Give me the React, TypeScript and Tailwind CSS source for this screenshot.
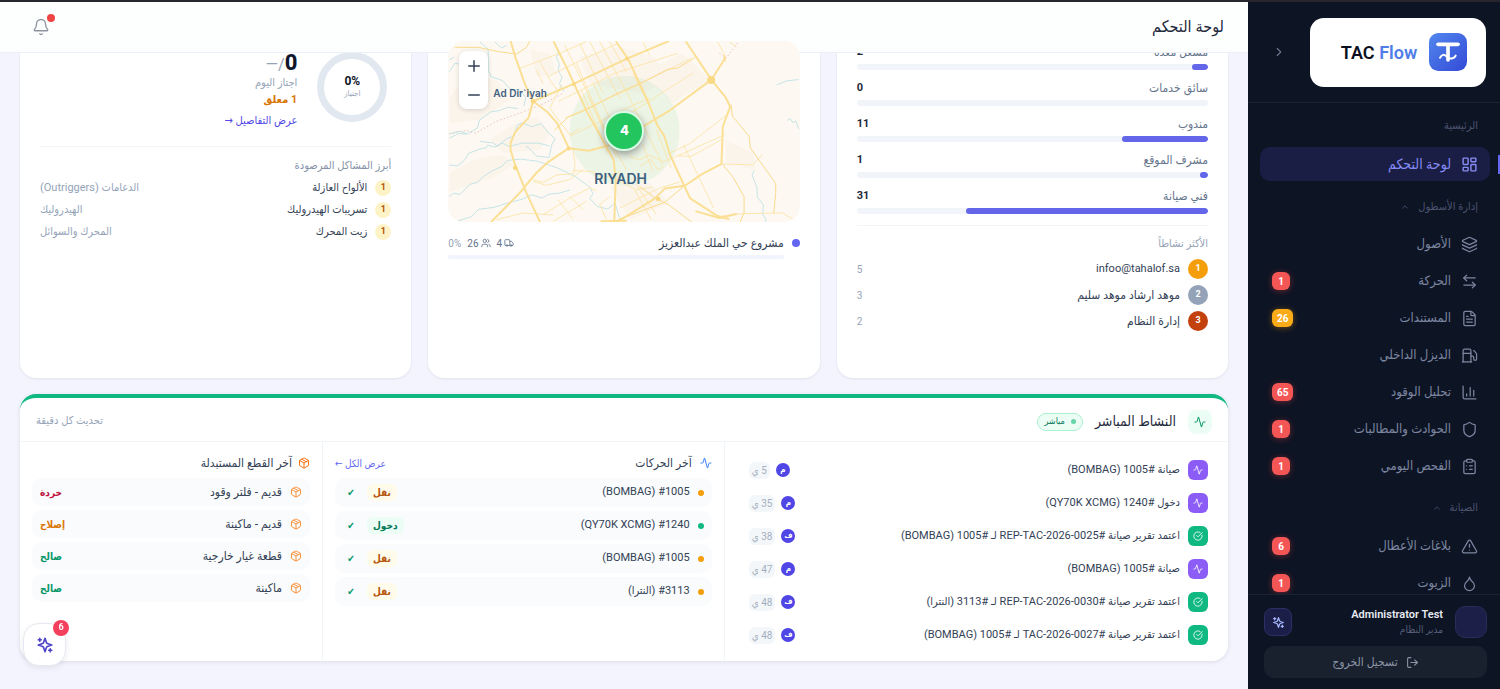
import React from "react";
import {
  Activity,
  ArrowLeftRight,
  Bell,
  ChartColumn,
  ChevronRight,
  ChevronUp,
  CircleCheckBig,
  ClipboardList,
  Droplet,
  FileText,
  Fuel,
  Layers,
  LayoutDashboard,
  LogOut,
  Minus,
  Package,
  Plus,
  Shield,
  TriangleAlert,
  Truck,
  Users,
  type LucideIcon,
} from "lucide-react";

type NavItem = { label: string; icon: LucideIcon; badge?: number; tone?: "red" | "amber" };

const fleetItems: NavItem[] = [
  { label: "الأصول", icon: Layers },
  { label: "الحركة", icon: ArrowLeftRight, badge: 1 },
  { label: "المستندات", icon: FileText, badge: 26, tone: "amber" },
  { label: "الديزل الداخلي", icon: Fuel },
  { label: "تحليل الوقود", icon: ChartColumn, badge: 65 },
  { label: "الحوادث والمطالبات", icon: Shield, badge: 1 },
  { label: "الفحص اليومي", icon: ClipboardList, badge: 1 },
];

const maintenanceItems: NavItem[] = [
  { label: "بلاغات الأعطال", icon: TriangleAlert, badge: 6 },
  { label: "الزيوت", icon: Droplet, badge: 1 },
];

const roles = [
  { label: "مشغل معدة", count: 2, width: 4.5 },
  { label: "سائق خدمات", count: 0, width: 0 },
  { label: "مندوب", count: 11, width: 24.5 },
  { label: "مشرف الموقع", count: 1, width: 2.3 },
  { label: "فني صيانة", count: 31, width: 69 },
];

const topUsers = [
  { name: "infoo@tahalof.sa", count: 5, color: "bg-[#f59e0b]", size: "text-[11px]" },
  { name: "موهد ارشاد موهد سليم", count: 3, color: "bg-[#94a3b8]", size: "text-xs" },
  { name: "إدارة النظام", count: 2, color: "bg-[#c2410c]", size: "text-xs" },
];

const issues = [
  { name: "الألواح العازلة", group: "الدعامات (Outriggers)" },
  { name: "تسريبات الهيدروليك", group: "الهيدروليك" },
  { name: "زيت المحرك", group: "المحرك والسوائل" },
];

const feed = [
  { text: "صيانة #1005 (BOMBAG)", who: "م", time: "5 ي", ok: false },
  { text: "دخول #1240 (QY70K XCMG)", who: "م", time: "35 ي", ok: false },
  { text: "اعتمد تقرير صيانة #REP-TAC-2026-0025 لـ #1005 (BOMBAG)", who: "ف", time: "38 ي", ok: true },
  { text: "صيانة #1005 (BOMBAG)", who: "م", time: "47 ي", ok: false },
  { text: "اعتمد تقرير صيانة #REP-TAC-2026-0030 لـ #3113 (النترا)", who: "ف", time: "48 ي", ok: true },
  { text: "اعتمد تقرير صيانة #TAC-2026-0027 لـ #1005 (BOMBAG)", who: "ف", time: "48 ي", ok: true },
];

const moves = [
  { text: "#1005 (BOMBAG)", kind: "نقل", entry: false },
  { text: "#1240 (QY70K XCMG)", kind: "دخول", entry: true },
  { text: "#1005 (BOMBAG)", kind: "نقل", entry: false },
  { text: "#3113 (النترا)", kind: "نقل", entry: false },
];

const parts = [
  { text: "قديم - فلتر وقود", state: "خردة", color: "text-[#be123c]" },
  { text: "قديم - ماكينة", state: "إصلاح", color: "text-[#d97706]" },
  { text: "قطعة غيار خارجية", state: "صالح", color: "text-[#059669]" },
  { text: "ماكينة", state: "صالح", color: "text-[#059669]" },
];

function Sparkles({ className }: { className: string }) {
  return (
    <svg viewBox="0 0 24 24" fill="none" stroke="currentColor" strokeWidth="2.25" strokeLinecap="round" strokeLinejoin="round" className={className} aria-hidden="true">
      <path d="m12 3-1.912 5.813a2 2 0 0 1-1.275 1.275L3 12l5.813 1.912a2 2 0 0 1 1.275 1.275L12 21l1.912-5.813a2 2 0 0 1 1.275-1.275L21 12l-5.813-1.912a2 2 0 0 1-1.275-1.275L12 3Z" />
      <path d="M5 3v4M3 5h4M19 17v4M17 19h4" />
    </svg>
  );
}

function LogoMark() {
  return (
    <svg viewBox="0 0 114 114" className="size-[38px] shrink-0" aria-hidden="true">
      <defs>
        <linearGradient id="mark" x1="0" y1="0" x2="1" y2="1">
          <stop offset="0" stopColor="#5288ee" />
          <stop offset="1" stopColor="#3349d6" />
        </linearGradient>
      </defs>
      <rect width="114" height="114" rx="28" fill="url(#mark)" />
      <g fill="none" stroke="#fff" strokeLinecap="round" strokeLinejoin="round">
        <path d="M27 34H87" strokeWidth="11" />
        <path d="M57 36V81" strokeWidth="11" />
        <path d="M33 74c6-11 13-10 19-4s19 12 28-2" strokeWidth="6" />
      </g>
    </svg>
  );
}

function NavLink({ item }: { item: NavItem }) {
  const Icon = item.icon;
  return (
    <a href="#" className="flex h-[34px] items-center gap-[10px] px-2 text-[#7c86a0]">
      <Icon className="size-[17px] shrink-0" strokeWidth={1.75} />
      <span className="flex-1 text-[13px]">{item.label}</span>
      {item.badge !== undefined && (
        <span
          className={
            item.tone === "amber"
              ? "flex h-[18px] min-w-[18px] items-center justify-center rounded-md bg-[#fbab18] px-[5px] text-[10px] font-bold text-white shadow-[0_1px_6px_rgba(245,158,11,0.4)]"
              : "flex h-[18px] min-w-[18px] items-center justify-center rounded-md bg-[#f45555] px-[5px] text-[10px] font-bold text-white shadow-[0_1px_6px_rgba(239,68,68,0.4)]"
          }
        >
          {item.badge}
        </span>
      )}
    </a>
  );
}

function NavHeading({ children, collapsible }: { children: React.ReactNode; collapsible?: boolean }) {
  return (
    <h2 className="flex h-4 items-center gap-2 px-2 text-[11px] font-medium text-[#4c5370]">
      {children}
      {collapsible && <ChevronUp className="size-[10px]" />}
    </h2>
  );
}

function Sidebar() {
  return (
    <aside className="sticky top-0 flex h-screen w-[252px] shrink-0 flex-col overflow-hidden bg-[#0d1424] pt-[2px]">
      <div className="flex h-[101px] shrink-0 items-center justify-between border-b border-[#1a2233] pr-[14px] pl-6">
        <div className="flex h-[69px] w-44 items-center justify-center gap-3 rounded-[14px] bg-white pl-3">
          <LogoMark />
          <span dir="ltr" className="text-[18px] font-semibold text-[#0b1020]">
            TAC <span className="text-[#4f7de8]">Flow</span>
          </span>
        </div>
        <button type="button" aria-label="طي القائمة" className="text-[#6b7488]">
          <ChevronRight className="size-3.5" />
        </button>
      </div>
      <nav className="relative min-h-0 flex-1 overflow-hidden pt-[15px] pr-[14px] pl-4">
        <NavHeading>الرئيسية</NavHeading>
        <a href="#" aria-current="page" className="-mr-1 -ml-1 mt-[13px] flex h-[34px] items-center gap-[10px] rounded-[10px] bg-[#1b1e44] px-3 text-[#868cf5]">
          <LayoutDashboard className="size-[17px] shrink-0" strokeWidth={2} />
          <span className="text-[14px] font-medium">لوحة التحكم</span>
        </a>
        <span className="absolute top-[52px] right-0 h-[19px] w-[2px] bg-[#6366f1]" />
        <div className="mt-[18px]">
          <NavHeading collapsible>إدارة الأسطول</NavHeading>
        </div>
        <div className="mt-3 flex flex-col gap-[3px]">
          {fleetItems.map((item) => (
            <NavLink key={item.label} item={item} />
          ))}
        </div>
        <div className="mt-[17px]">
          <NavHeading collapsible>الصيانة</NavHeading>
        </div>
        <div className="mt-[13px] flex flex-col gap-[3px]">
          {maintenanceItems.map((item) => (
            <NavLink key={item.label} item={item} />
          ))}
        </div>
      </nav>
      <footer className="shrink-0 border-t border-[#1a2233] pt-[11px] pr-[13px] pb-[11px] pl-4">
        <div className="flex items-center gap-3">
          <span className="size-8 shrink-0 rounded-[10px] border border-[#272c58] bg-[#1c2048]" />
          <div className="flex-1">
            <p className="text-[11px] leading-4 font-semibold text-[#e8ebf2]">Administrator Test</p>
            <p className="text-[10px] leading-[14px] text-[#566078]">مدير النظام</p>
          </div>
          <button type="button" aria-label="المساعد الذكي" className="flex size-7 items-center justify-center rounded-lg border border-[#2a2f66] bg-[#1b1f47] text-[#a5b4fc]">
            <Sparkles className="size-[13px]" />
          </button>
        </div>
        <button type="button" className="mt-2 flex h-8 w-full items-center justify-center gap-2 rounded-[10px] bg-[#19202e] text-xs text-[#8c95a6]">
          <LogOut className="size-[13px]" />
          تسجيل الخروج
        </button>
      </footer>
    </aside>
  );
}

function RiyadhMap() {
  return (
    <div className="relative z-20 h-[181px] overflow-hidden rounded-2xl bg-[#fcf8f1]">
      <svg viewBox="54 33 1056 544" preserveAspectRatio="xMidYMid slice" className="size-full" role="img" aria-label="خريطة الرياض">
        <rect x="54" y="33" width="1056" height="544" fill="#fdf9f2" />
        <g fill="#f8ede0" opacity="0.4">
          <path d="M60 430l70-40 90-15 30 30-60 40-130 40zM180 330l60-40 80-30 40 50-30 50-110 10zM450 80l120-30 100 30 60 70-100 40-150-30zM640 130l120-60 80 80-110 70zM60 200l50-60 90 10 40 60-90 60-90 10zM890 330l80 40 10 50-90-20zM540 470l120-10 60 60-120 50zM300 60l60 10 20 60-60 10z" />
        </g>
        <circle cx="585" cy="303" r="165" fill="#22c55e" opacity="0.08" />
        <g fill="none" stroke="#e4b9bb" strokeWidth="3" strokeDasharray="4 7">
          <path d="M58 312l50-10 30 8 60-35 90-32 60-25 52-28M870 70l20 14 35-45" />
        </g>
        <g fill="none" stroke="#b9dfe4" strokeWidth="2.5" strokeLinejoin="round">
          <path d="M150 36l25 22 0 60 8 22 35 12 22 25 30 4 18 22-6 25M58 125l18-26 22 8M58 90l14-8M195 36l20 18 15-8M378 45l8 24-6 14 9 20-4 18 12 22-8 18 14 24" />
          <path d="M58 312l30-8 25 8 30-18 5-22 35-26 26-4 25-10 30 4M58 325l28-14 24 2M150 335l38 4 14 10 28-22 22-8 10-32 14-8 30 12 28-10 20 26 22 20-10 18-8 38-38-4-20-22-12-8" />
          <path d="M58 406l25 2 20-16 14-22 32-12 20-4 4-8 22 6 22-12 20 10 40-10 50 0 30 8" />
          <path d="M58 500l14-10 18 4 30-30 22-6 16-16 28-18 30-14 16-18 40-4 50 6 60 20 54 26 44 32 10 20-10 14 22 24 32 8 22-18 12 40 12 12" />
          <path d="M80 575l44-14 22-22 46-6 44-14 40-10 30-14 30 10 22-12 28-2 34-10M1042 165l30-12 36-4M1074 272l8-6 8 12 10-4 8 24" />
          <path d="M974 422l-6 14 14 36 2 30 18 24-2 28 10 16-4 10" />
        </g>
        <g fill="none" stroke="#fbe3a4" strokeWidth="2.5" strokeLinejoin="round">
          <path d="M355 140l80-40 130-60M385 215l170-85 190-60M405 265l200-90 180-90M420 320l180-90 60-25M270 115l120-45 80-35M330 95l30 55 25 35M320 120l20 42" />
          <path d="M405 45l45 95 80 170 60 110M450 40l70 150M480 35l90 170M510 35l80 150 110 220M540 35l50 90M640 36l20 40M440 100l90 210M455 180l80 190M475 200l85 180M490 160l90 190M610 130l50 100" />
          <path d="M395 165l-35 70 60 80 30-20M310 450l30 8 40-22 52-4 4-30-8-50M430 422l60 4 30 20 50-20M310 455l40 12 70-18 40-30" />
          <path d="M340 555l80-50 60-30 20 8M370 575l100-60M385 510l44 58M420 500l40 40M200 570l80-20 90 6M530 570l-20-46 30-24" />
          <path d="M600 380l30 10 30-14 40 20 40-16 145-65M630 410l34-22 20 32 20-10M640 345l30 80M680 300l45 115M720 370l60-28 116-90M745 378l40 2 90-50M762 345l90 190M570 535l120-60 60-18M560 450l60 30 50-8M615 480l50 90M620 465l60 90" />
          <path d="M880 403l90 2 30-32M870 560l70-8 120-2 30 18M865 36l20 40 4 20M900 36l22 14M600 250l50-30 60-40 80-50" />
        </g>
        <g fill="none" stroke="#f9da8c" strokeWidth="4" strokeLinejoin="round" strokeLinecap="round">
          <path d="M375 300l40-38 50-20 90-48 90-40 70-36 30-4 50-30M75 52l70 0 55 12 60 8 30-20 10-18M905 225l4 34 50 60 4 36 76 106 0 30-6 58M880 405l30 36 34 60 0 48-12 28M630 470l45 34 40 20 70 52M565 570l140-52 60-50" strokeWidth="3" />
        </g>
        <g fill="none" stroke="#fbdf95" strokeWidth="6" strokeLinejoin="round" strokeLinecap="round">
          <path d="M243 36l15 50 28 78 24 50-14 50-40 42-14 34 0 20 12 40 36 90 42 90" />
          <path d="M310 214l40 30 32 36 35 75-62 42-35 32-50 60-90 92" />
          <path d="M310 214l122-52 160-76 124-52" />
          <path d="M372 36l40 80 60 130 80 145 6 60-4 120M417 355l60 8 60-16" />
          <path d="M560 36l36 52 56 120 32 80 20 30 16 54 44 96 18 38 80 52 35 10" />
          <path d="M640 290l80-48 125-92M770 36l76 114 42 52 14 28-22 60-4 112-60 32-50 34-60 8-30 30-115 72M845 150l40-62 0-10" />
          <path d="M515 575l74-2 M800 545l70 20 50-12" />
        </g>
        <g fill="#f9d984">
          <circle cx="845" cy="150" r="12" />
          <circle cx="256" cy="414" r="7" />
          <circle cx="310" cy="214" r="7" />
          <circle cx="417" cy="356" r="6" />
          <circle cx="432" cy="162" r="6" />
          <circle cx="592" cy="86" r="6" />
          <circle cx="686" cy="508" r="7" />
        </g>
      </svg>
      <span dir="ltr" className="absolute top-[44px] left-[45px] font-['Inter','Liberation_Sans',sans-serif] text-[10px] leading-4 font-semibold text-[#416080]">
        Ad Dir`iyah
      </span>
      <span dir="ltr" className="absolute top-[128px] left-[146px] font-['Inter','Liberation_Sans',sans-serif] text-[14px] leading-5 font-semibold text-[#3c6080]">
        RIYADH
      </span>
      <span className="absolute top-[70px] left-[156px] flex size-10 items-center justify-center rounded-full border-2 border-[#d9fbe6] bg-[#22c55e] font-['Inter','Liberation_Sans',sans-serif] text-[13px] font-extrabold text-white shadow-[0_3px_8px_rgba(0,0,0,0.4)]">
        4
      </span>
      <div className="absolute top-[10px] left-[11px] flex w-[29px] flex-col overflow-hidden rounded-lg bg-white text-[#334155] shadow-[0_1px_5px_rgba(0,0,0,0.15)]">
        <button type="button" aria-label="تكبير" className="flex h-[29px] items-center justify-center">
          <Plus className="size-[18px]" strokeWidth={2} />
        </button>
        <button type="button" aria-label="تصغير" className="flex h-[29px] items-center justify-center">
          <Minus className="size-[18px]" strokeWidth={2} />
        </button>
      </div>
    </div>
  );
}

function RolesCard() {
  return (
    <section className="rounded-b-2xl bg-white px-5 pt-[6px] shadow-[0_1px_3px_rgba(15,23,42,0.08)]">
      <ul className="flex flex-col gap-2">
        {roles.map((role) => (
          <li key={role.label}>
            <div className="flex h-5 items-center justify-between text-xs">
              <span className="text-[#64748b]">{role.label}</span>
              <span className="text-[11px] font-bold text-[#1e293b]">{role.count}</span>
            </div>
            <div className="mt-[2px] h-[6px] overflow-hidden rounded-full bg-[#f1f4f9]">
              <div className="h-full rounded-full bg-[#6366e8]" style={{ width: `${role.width}%` }} />
            </div>
          </li>
        ))}
      </ul>
      <div className="mt-[11px] border-t border-[#f1f4f8] pt-[10px] pb-[47px]">
        <h3 className="text-[11px] leading-4 text-[#94a3b8]">الأكثر نشاطاً</h3>
        <ol className="mt-[7px] flex flex-col gap-[6px]">
          {topUsers.map((user, i) => (
            <li key={user.name} className="flex h-5 items-center gap-2">
              <span className={`${user.color} flex size-5 items-center justify-center rounded-full text-[9px] font-bold text-white`}>{i + 1}</span>
              <span className={`${user.size} flex-1 text-[#334155]`}>{user.name}</span>
              <span className="text-[10px] text-[#94a3b8]">{user.count}</span>
            </li>
          ))}
        </ol>
      </div>
    </section>
  );
}

function MapCard() {
  return (
    <section className="rounded-b-2xl bg-white px-5 pt-[5px] shadow-[0_1px_3px_rgba(15,23,42,0.08)]">
      <RiyadhMap />
      <div className="mt-3 flex gap-2">
        <span className="mt-[5px] size-2 shrink-0 rounded-full bg-[#6366f1]" />
        <div className="flex-1">
          <div className="flex h-[18px] items-center justify-between">
            <h3 className="text-xs font-medium text-[#334155]">مشروع حي الملك عبدالعزيز</h3>
            <div className="flex items-center gap-[6px] text-[10px] text-[#64748b]">
              <span className="flex items-center gap-[2px]">
                <Truck className="size-[10px]" />4
              </span>
              <span className="flex items-center gap-[2px]">
                <Users className="size-[10px]" />
                26
              </span>
              <span dir="ltr" className="text-[#94a3b8]">0%</span>
            </div>
          </div>
          <div className="mt-[3px] h-1 rounded-full bg-[#f1f4fa]" />
        </div>
      </div>
    </section>
  );
}

function InspectionCard() {
  return (
    <section className="rounded-b-2xl bg-white px-5 pt-4 shadow-[0_1px_3px_rgba(15,23,42,0.08)]">
      <div className="flex items-start gap-5 pr-1">
        <div className="flex size-[70px] shrink-0 flex-col items-center justify-center rounded-full border-[7px] border-[#e2e8f0]">
          <span dir="ltr" className="text-xs leading-[14px] font-bold text-[#0f172a]">0%</span>
          <span className="text-[8px] leading-3 text-[#94a3b8]">اجتياز</span>
        </div>
        <div className="flex flex-col">
          <p className="h-[22px] text-[22px] leading-[22px] font-extrabold text-[#0f172a]">
            0<span className="text-base leading-4 font-normal text-[#94a3b8]">/—</span>
          </p>
          <p className="text-[11px] leading-[18px] text-[#94a3b8]">اجتاز اليوم</p>
          <p className="text-[11px] leading-4 font-bold text-[#d97706]">1 معلق</p>
          <a href="#" className="mt-1 text-[11px] leading-[18px] font-medium text-[#4f46e5]">عرض التفاصيل →</a>
        </div>
      </div>
      <div className="mt-4 border-t border-[#f1f4f8] pt-[11px]">
        <h3 className="text-[11px] leading-4 text-[#8592a8]">أبرز المشاكل المرصودة</h3>
        <ul className="mt-[6px] flex flex-col gap-[6px]">
          {issues.map((issue) => (
            <li key={issue.name} className="flex h-4 items-center gap-2">
              <span className="flex size-4 items-center justify-center rounded-full bg-[#fef3c7] text-[9px] font-bold text-[#b45309]">1</span>
              <span className="flex-1 text-[11px] text-[#334155]">{issue.name}</span>
              <span className="text-[11px] text-[#94a3b8]">{issue.group}</span>
            </li>
          ))}
        </ul>
      </div>
    </section>
  );
}

function ActivityCard() {
  return (
    <section className="mt-4 rounded-2xl border-t-4 border-[#10b981] bg-white shadow-[0_1px_4px_rgba(15,23,42,0.1)]">
      <header className="flex h-11 items-center gap-3 border-b border-[#f1f4f8] px-4 pt-1">
        <span className="flex size-6 items-center justify-center rounded-lg bg-[#ecfdf5] text-[#059669]">
          <Activity className="size-3" />
        </span>
        <h2 className="text-[14px] font-medium text-[#1e293b]">النشاط المباشر</h2>
        <span className="flex h-[18px] items-center gap-[6px] rounded-full border border-[#a7f3d0] bg-[#ecfdf5] px-[6px] text-[9px] font-medium text-[#047857]">
          <span className="size-[5px] rounded-full bg-[#6ad4a9]" />
          مباشر
        </span>
        <span className="mr-auto text-[11px] text-[#94a3b8]">تحديث كل دقيقة</span>
      </header>
      <div className="grid grid-cols-12">
        <ul className="col-span-5 flex flex-col gap-[13px] pt-[18px] pr-5 pb-4 pl-6">
          {feed.map((row, i) => (
            <li key={i} className="flex h-5 items-center gap-2">
              <span
                className={
                  row.ok
                    ? "flex size-5 shrink-0 items-center justify-center rounded-md bg-[#10b981] text-white"
                    : "flex size-5 shrink-0 items-center justify-center rounded-md bg-[#8b5cf6] text-white"
                }
              >
                {row.ok ? <CircleCheckBig className="size-[10px]" /> : <Activity className="size-[10px]" />}
              </span>
              <span className="flex-1 text-[11px] whitespace-nowrap text-[#334155]">{row.text}</span>
              <span className="flex items-center gap-[6px]">
                <span className="flex size-[14px] items-center justify-center rounded-full bg-[#4f46e5] text-[8px] font-bold text-white">{row.who}</span>
                <span className="flex h-[17px] items-center rounded-md bg-[#f4f7fa] px-[3px] text-[10px] text-[#a3afc0]">{row.time}</span>
              </span>
            </li>
          ))}
        </ul>
        <div className="col-span-4 border-x border-[#f1f4f8] px-3 pt-3">
          <div className="flex h-[18px] items-center gap-2">
            <Activity className="size-3 text-[#3b82f6]" />
            <h3 className="flex-1 text-xs font-medium text-[#334155]">آخر الحركات</h3>
            <a href="#" className="text-[10px] text-[#6366f1]">عرض الكل ←</a>
          </div>
          <ul className="mt-[6px] flex flex-col gap-1">
            {moves.map((row, i) => (
              <li key={i} className="flex h-[29px] items-center gap-2 rounded-[10px] bg-[#f9fbfc] px-2">
                <span className={row.entry ? "size-[6px] rounded-full bg-[#10b981]" : "size-[6px] rounded-full bg-[#f59e0b]"} />
                <span className="flex-1 text-[11px] text-[#334155]">{row.text}</span>
                <span className="flex w-[47px] justify-end">
                  <span
                    className={
                      row.entry
                        ? "rounded-md bg-[#ecfdf5] px-[6px] text-[10px] leading-[17px] font-bold text-[#047857]"
                        : "rounded-md bg-[#fffbeb] px-[6px] text-[10px] leading-[17px] font-bold text-[#b45309]"
                    }
                  >
                    {row.kind}
                  </span>
                </span>
                <span className="w-4 text-center text-[10px] text-[#059669]">✔</span>
              </li>
            ))}
          </ul>
        </div>
        <div className="col-span-3 px-3 pt-3">
          <div className="flex h-[18px] items-center gap-[6px]">
            <Package className="size-3 text-[#f97316]" />
            <h3 className="text-xs font-medium text-[#334155]">آخر القطع المستبدلة</h3>
          </div>
          <ul className="mt-[6px] flex flex-col gap-1">
            {parts.map((row) => (
              <li key={row.text} className="flex h-7 items-center gap-2 rounded-[10px] bg-[#f9fbfc] px-2">
                <Package className="size-3 text-[#fb923c]" />
                <span className="flex-1 text-xs text-[#334155]">{row.text}</span>
                <span className={`${row.color} text-[10px] font-bold`}>{row.state}</span>
              </li>
            ))}
          </ul>
        </div>
      </div>
    </section>
  );
}

export default function App() {
  return (
    <div dir="rtl" className="flex min-h-screen bg-[#f3f4fd] font-['Roboto','DejaVu_Sans_Condensed','DejaVu_Sans',sans-serif]">
      <div className="fixed inset-x-0 top-0 z-30 h-[2px] bg-[#27262e]" />
      <Sidebar />
      <main className="min-w-0 flex-1">
        <header className="sticky top-0 z-10 flex h-[53px] items-center justify-between border-b border-[#eceff5] bg-[#fdfefe] pt-[2px] pr-6 pl-8">
          <h1 className="text-[16px] font-medium text-[#1e293b]">لوحة التحكم</h1>
          <button type="button" aria-label="الإشعارات" className="relative flex size-[18px] items-center justify-center text-[#8d949f]">
            <Bell className="size-[18px]" strokeWidth={1.75} />
            <span className="absolute -top-1 -right-[5px] size-2 rounded-full bg-[#ef4444]" />
          </button>
        </header>
        <div className="-mt-[17px] px-5 pb-5">
          <div className="grid grid-cols-3 gap-[17px]">
            <RolesCard />
            <MapCard />
            <InspectionCard />
          </div>
          <ActivityCard />
        </div>
      </main>
      <button type="button" aria-label="المساعد الذكي" className="fixed bottom-[23px] left-[23px] z-30 flex size-[43px] items-center justify-center rounded-2xl border border-[#e7e9f2] bg-white text-[#4f46c8] shadow-[0_2px_6px_rgba(15,23,42,0.08)]">
        <Sparkles className="size-[18px]" />
        <span className="absolute -top-1 -right-1 flex size-4 items-center justify-center rounded-full bg-[#f43f5e] text-[9px] font-bold text-white">6</span>
      </button>
    </div>
  );
}
